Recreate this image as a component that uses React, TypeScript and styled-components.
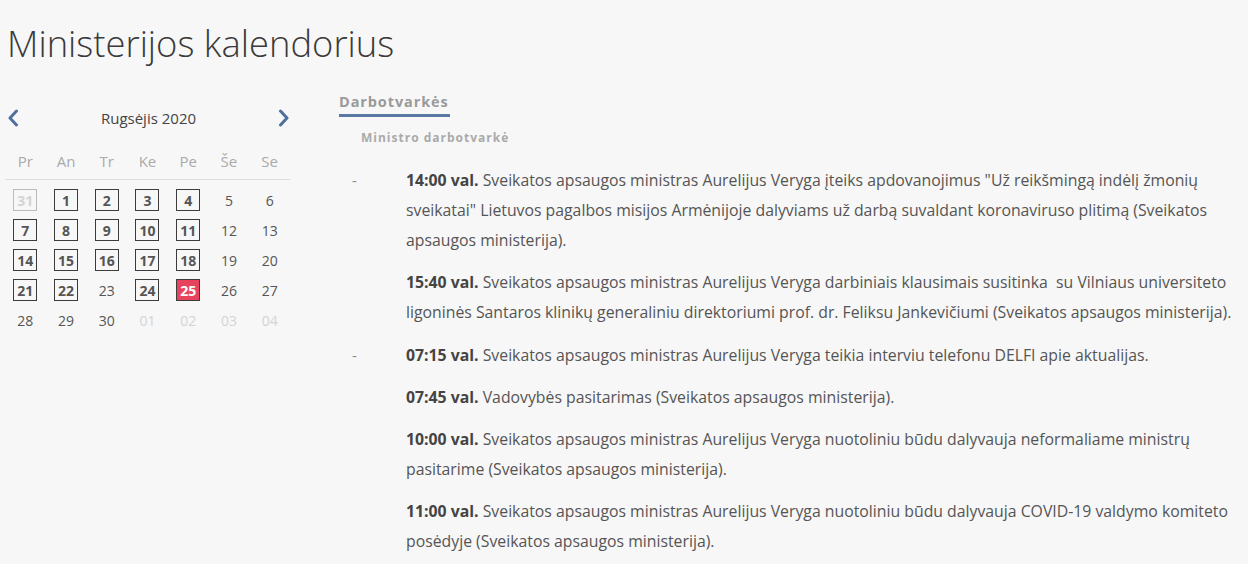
import React from "react";
import styled, { createGlobalStyle } from "styled-components";

const GlobalStyle = createGlobalStyle`
    html, body {
        margin: 0;
        padding: 0;
        background: #f7f7f7;
    }

    body {
        font-family: "Open Sans", "Noto Sans", sans-serif;
        color: #555;
    }
`;

const Page = styled.div`
    padding: 0 8px 0 5px;
    box-sizing: border-box;
    width: 1248px;
    height: 564px;
    overflow: hidden;
`;

const Title = styled.h1`
    margin: 0;
    padding: 18px 0 0 2px;

    font-family: "Open Sans", sans-serif;
    font-weight: 300;
    font-size: 36.4px;
    line-height: 50px;

    color: #3a3a3a;
`;

const Columns = styled.div`
    display: flex;
    flex-direction: row;
    align-items: flex-start;
    margin-top: 40px;
`;

const CalendarColumn = styled.div`
    width: 285px;
    flex-shrink: 0;
`;

const MonthBar = styled.div`
    display: flex;
    align-items: center;
    justify-content: space-between;
    height: 20px;
    padding: 0 0 0 2px;
`;

const NavButton = styled.button`
    display: flex;
    align-items: center;
    justify-content: center;
    width: 12px;
    height: 20px;
    padding: 0;

    border: none;
    background: none;
    cursor: pointer;
`;

const MonthTitle = styled.span`
    font-size: 15px;
    font-weight: 400;
    color: #444;
`;

const DayGrid = styled.div`
    display: grid;
    grid-template-columns: repeat(7, 1fr);
    margin-top: 15px;
`;

const WeekdayCell = styled.div`
    height: 36px;
    display: flex;
    align-items: center;
    justify-content: center;

    font-size: 15px;
    color: #aaa;

    border-bottom: 1px solid #ddd;
    margin-bottom: 5px;
`;

const DayCell = styled.div`
    height: 30px;
    display: flex;
    align-items: center;
    justify-content: center;
`;

type DayVariant = "boxed" | "plain" | "muted" | "mutedBoxed" | "today";

const DayLabel = styled.span<{ $variant: DayVariant }>`
    display: flex;
    align-items: center;
    justify-content: center;
    width: 24px;
    height: 22px;
    box-sizing: border-box;

    font-size: 14px;
    font-weight: ${p => (p.$variant === "plain" || p.$variant === "muted" ? 400 : 700)};

    color: ${p =>
        p.$variant === "today" ? "#fff" :
        p.$variant === "muted" || p.$variant === "mutedBoxed" ? "#d4d4d4" : "#555"};

    border: 1px solid ${p =>
        p.$variant === "boxed" ? "#3c3c3c" :
        p.$variant === "mutedBoxed" ? "#bbb" :
        p.$variant === "today" ? "#3c3c3c" : "transparent"};

    background: ${p => (p.$variant === "today" ? "#e8435c" : "transparent")};
`;

const ContentColumn = styled.div`
    flex: 1;
    margin-left: 49px;
    margin-top: -18px;
`;

const Tab = styled.div`
    display: inline-block;
    padding: 0 1px 2px 0;

    font-size: 14.5px;
    font-weight: 700;
    letter-spacing: 0.9px;
    line-height: 20px;
    color: #9a9a9a;

    border-bottom: 3px solid #5a78a3;
`;

const Subtitle = styled.div`
    margin: 11px 0 0 22px;

    font-size: 12px;
    font-weight: 700;
    letter-spacing: 1px;
    line-height: 20px;
    color: #aaa;
`;

const Agenda = styled.div`
    margin-top: 17px;
`;

const Group = styled.div`
    display: flex;
    flex-direction: row;
    margin-bottom: 13px;
`;

const Bullet = styled.span`
    width: 67px;
    flex-shrink: 0;
    padding-left: 13px;
    box-sizing: border-box;

    font-size: 15px;
    line-height: 30px;
    color: #888;
`;

const Entries = styled.div`
    display: flex;
    flex-direction: column;
    gap: 12px;
`;

const Entry = styled.p`
    margin: 0;

    font-size: 15.8px;
    line-height: 30px;
    color: #555;
`;

const Time = styled.strong`
    font-weight: 700;
    color: #444;
`;

function Chevron(props: { dir: "left" | "right" }) {
    return (
        <svg width="12" height="18" viewBox="0 0 12 18">
            <path
                d={props.dir === "left" ? "M9.5 2 L3 9 L9.5 16" : "M2.5 2 L9 9 L2.5 16"}
                fill="none"
                stroke="#4f6f9f"
                strokeWidth="3"
                strokeLinecap="round"
                strokeLinejoin="round"
            />
        </svg>
    );
}

const weekdays = ["Pr", "An", "Tr", "Ke", "Pe", "Še", "Se"];

const days: { label: string; variant: DayVariant }[] = [
    { label: "31", variant: "mutedBoxed" },
    ...Array.from({ length: 30 }, (_, i) => i + 1).map(d => {
        const weekday = d % 7; // 5 = Še, 6 = Se
        let variant: DayVariant = "boxed";
        if (d === 25) variant = "today";
        else if (weekday === 5 || weekday === 6 || d === 23 || d >= 28) variant = "plain";
        return { label: String(d), variant };
    }),
    { label: "01", variant: "muted" },
    { label: "02", variant: "muted" },
    { label: "03", variant: "muted" },
    { label: "04", variant: "muted" },
];

const agenda: { time: string; text: string }[][] = [
    [
        {
            time: "14:00 val.",
            text: "Sveikatos apsaugos ministras Aurelijus Veryga įteiks apdovanojimus \"Už reikšmingą indėlį žmonių sveikatai\" Lietuvos pagalbos misijos Armėnijoje dalyviams už darbą suvaldant koronaviruso plitimą (Sveikatos apsaugos ministerija).",
        },
        {
            time: "15:40 val.",
            text: "Sveikatos apsaugos ministras Aurelijus Veryga darbiniais klausimais susitinka\u00a0 su Vilniaus universiteto ligoninės Santaros klinikų generaliniu direktoriumi prof. dr. Feliksu Jankevičiumi (Sveikatos apsaugos ministerija).",
        },
    ],
    [
        {
            time: "07:15 val.",
            text: "Sveikatos apsaugos ministras Aurelijus Veryga teikia interviu telefonu DELFI apie aktualijas.",
        },
        {
            time: "07:45 val.",
            text: "Vadovybės pasitarimas (Sveikatos apsaugos ministerija).",
        },
        {
            time: "10:00 val.",
            text: "Sveikatos apsaugos ministras Aurelijus Veryga nuotoliniu būdu dalyvauja neformaliame ministrų pasitarime (Sveikatos apsaugos ministerija).",
        },
        {
            time: "11:00 val.",
            text: "Sveikatos apsaugos ministras Aurelijus Veryga nuotoliniu būdu dalyvauja COVID-19 valdymo komiteto posėdyje (Sveikatos apsaugos ministerija).",
        },
    ],
];

function Calendar() {
    return (
        <CalendarColumn>
            <MonthBar>
                <NavButton aria-label="Ankstesnis mėnuo"><Chevron dir="left" /></NavButton>
                <MonthTitle>Rugsėjis 2020</MonthTitle>
                <NavButton aria-label="Kitas mėnuo"><Chevron dir="right" /></NavButton>
            </MonthBar>
            <DayGrid>
                {weekdays.map(w => <WeekdayCell key={w}>{w}</WeekdayCell>)}
                {days.map((d, i) => (
                    <DayCell key={i}>
                        <DayLabel $variant={d.variant}>{d.label}</DayLabel>
                    </DayCell>
                ))}
            </DayGrid>
        </CalendarColumn>
    );
}

export default function App() {
    return (
        <>
            <GlobalStyle />
            <Page>
                <Title>Ministerijos kalendorius</Title>
                <Columns>
                    <Calendar />
                    <ContentColumn>
                        <Tab>Darbotvarkės</Tab>
                        <Subtitle>Ministro darbotvarkė</Subtitle>
                        <Agenda>
                            {agenda.map((group, gi) => (
                                <Group key={gi}>
                                    <Bullet>-</Bullet>
                                    <Entries>
                                        {group.map(e => (
                                            <Entry key={e.time}>
                                                <Time>{e.time}</Time> {e.text}
                                            </Entry>
                                        ))}
                                    </Entries>
                                </Group>
                            ))}
                        </Agenda>
                    </ContentColumn>
                </Columns>
            </Page>
        </>
    );
}
